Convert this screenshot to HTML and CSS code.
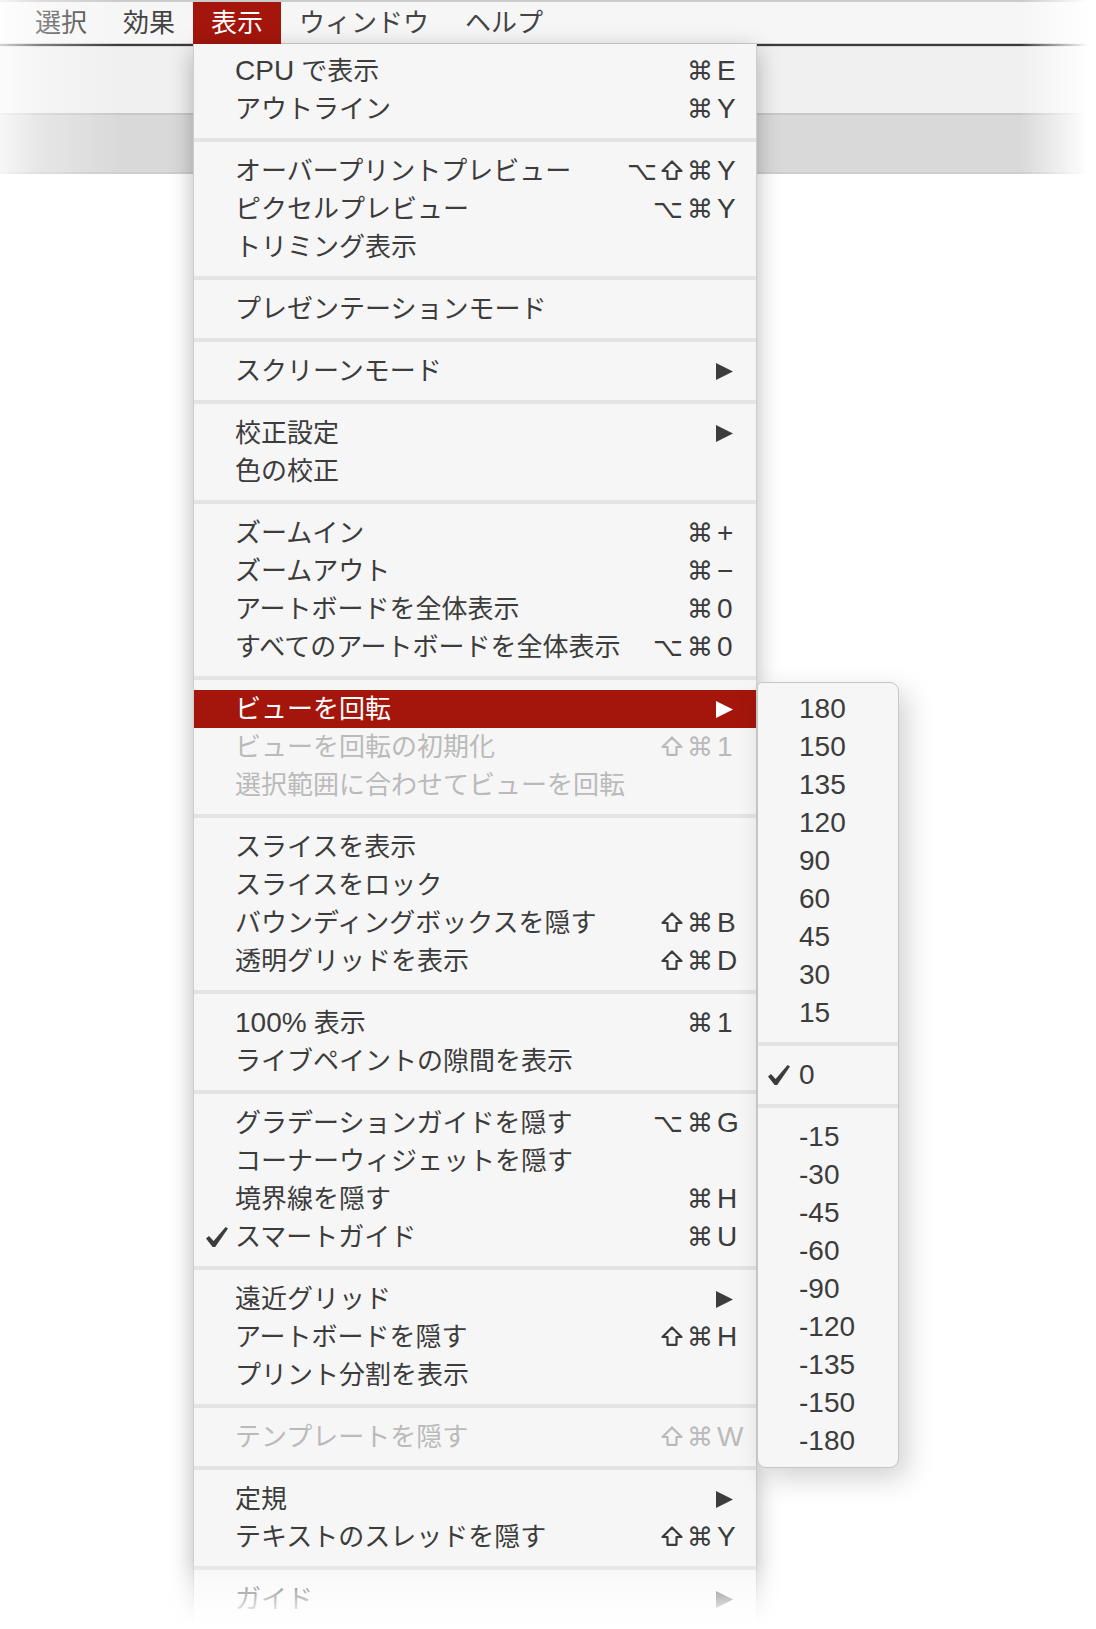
FILE: index.html
```html
<!DOCTYPE html>
<html lang="ja">
<head>
<meta charset="utf-8">
<title>表示メニュー</title>
<link rel="stylesheet" href="styles.css">
</head>
<body>
<div class="screen">
  <div class="menubar">
    <div class="mb-item">選択</div>
    <div class="mb-item">効果</div>
    <div class="mb-item active">表示</div>
    <div class="mb-item">ウィンドウ</div>
    <div class="mb-item">ヘルプ</div>
  </div>
  <div class="window">
    <div class="win-light"></div>
    <div class="win-dark"></div>
  </div>
  <div class="fade-left"></div>
  <div class="fade-right"></div>

  <div class="dropdown">
    <div class="row"><span class="chk"></span><span class="label"><span class="lat">CPU</span> で表示</span><span class="sc"><span class="mods"><span class="m">⌘</span></span><span class="key">E</span></span></div>
    <div class="row"><span class="chk"></span><span class="label">アウトライン</span><span class="sc"><span class="mods"><span class="m">⌘</span></span><span class="key">Y</span></span></div>
    <div class="sep"></div>
    <div class="row"><span class="chk"></span><span class="label">オーバープリントプレビュー</span><span class="sc"><span class="mods"><span class="m">⌥</span><svg class="shift" viewBox="0 0 22 20"><path d="M11 1.5L20.5 11H15.5V18.8H6.5V11H1.5Z"/></svg><span class="m">⌘</span></span><span class="key">Y</span></span></div>
    <div class="row"><span class="chk"></span><span class="label">ピクセルプレビュー</span><span class="sc"><span class="mods"><span class="m">⌥</span><span class="m">⌘</span></span><span class="key">Y</span></span></div>
    <div class="row"><span class="chk"></span><span class="label">トリミング表示</span></div>
    <div class="sep"></div>
    <div class="row"><span class="chk"></span><span class="label">プレゼンテーションモード</span></div>
    <div class="sep"></div>
    <div class="row"><span class="chk"></span><span class="label">スクリーンモード</span><svg class="arrow" viewBox="0 0 17 17"><path d="M0 0L17 8.5L0 17Z"/></svg></div>
    <div class="sep"></div>
    <div class="row"><span class="chk"></span><span class="label">校正設定</span><svg class="arrow" viewBox="0 0 17 17"><path d="M0 0L17 8.5L0 17Z"/></svg></div>
    <div class="row"><span class="chk"></span><span class="label">色の校正</span></div>
    <div class="sep"></div>
    <div class="row"><span class="chk"></span><span class="label">ズームイン</span><span class="sc"><span class="mods"><span class="m">⌘</span></span><span class="key">+</span></span></div>
    <div class="row"><span class="chk"></span><span class="label">ズームアウト</span><span class="sc"><span class="mods"><span class="m">⌘</span></span><span class="key">−</span></span></div>
    <div class="row"><span class="chk"></span><span class="label">アートボードを全体表示</span><span class="sc"><span class="mods"><span class="m">⌘</span></span><span class="key">0</span></span></div>
    <div class="row"><span class="chk"></span><span class="label">すべてのアートボードを全体表示</span><span class="sc"><span class="mods"><span class="m">⌥</span><span class="m">⌘</span></span><span class="key">0</span></span></div>
    <div class="sep"></div>
    <div class="row hl"><span class="chk"></span><span class="label">ビューを回転</span><svg class="arrow" viewBox="0 0 17 17"><path d="M0 0L17 8.5L0 17Z"/></svg></div>
    <div class="row dis"><span class="chk"></span><span class="label">ビューを回転の初期化</span><span class="sc"><span class="mods"><svg class="shift" viewBox="0 0 22 20"><path d="M11 1.5L20.5 11H15.5V18.8H6.5V11H1.5Z"/></svg><span class="m">⌘</span></span><span class="key">1</span></span></div>
    <div class="row dis"><span class="chk"></span><span class="label">選択範囲に合わせてビューを回転</span></div>
    <div class="sep"></div>
    <div class="row"><span class="chk"></span><span class="label">スライスを表示</span></div>
    <div class="row"><span class="chk"></span><span class="label">スライスをロック</span></div>
    <div class="row"><span class="chk"></span><span class="label">バウンディングボックスを隠す</span><span class="sc"><span class="mods"><svg class="shift" viewBox="0 0 22 20"><path d="M11 1.5L20.5 11H15.5V18.8H6.5V11H1.5Z"/></svg><span class="m">⌘</span></span><span class="key">B</span></span></div>
    <div class="row"><span class="chk"></span><span class="label">透明グリッドを表示</span><span class="sc"><span class="mods"><svg class="shift" viewBox="0 0 22 20"><path d="M11 1.5L20.5 11H15.5V18.8H6.5V11H1.5Z"/></svg><span class="m">⌘</span></span><span class="key">D</span></span></div>
    <div class="sep"></div>
    <div class="row"><span class="chk"></span><span class="label"><span class="lat">100%</span> 表示</span><span class="sc"><span class="mods"><span class="m">⌘</span></span><span class="key">1</span></span></div>
    <div class="row"><span class="chk"></span><span class="label">ライブペイントの隙間を表示</span></div>
    <div class="sep"></div>
    <div class="row"><span class="chk"></span><span class="label">グラデーションガイドを隠す</span><span class="sc"><span class="mods"><span class="m">⌥</span><span class="m">⌘</span></span><span class="key">G</span></span></div>
    <div class="row"><span class="chk"></span><span class="label">コーナーウィジェットを隠す</span></div>
    <div class="row"><span class="chk"></span><span class="label">境界線を隠す</span><span class="sc"><span class="mods"><span class="m">⌘</span></span><span class="key">H</span></span></div>
    <div class="row"><span class="chk"><svg class="check" viewBox="0 0 22 20"><path d="M0 11.5L3 9L7.6 14L19.6 0L22 1.6L9.2 20L6.6 20Z"/></svg></span><span class="label">スマートガイド</span><span class="sc"><span class="mods"><span class="m">⌘</span></span><span class="key">U</span></span></div>
    <div class="sep"></div>
    <div class="row"><span class="chk"></span><span class="label">遠近グリッド</span><svg class="arrow" viewBox="0 0 17 17"><path d="M0 0L17 8.5L0 17Z"/></svg></div>
    <div class="row"><span class="chk"></span><span class="label">アートボードを隠す</span><span class="sc"><span class="mods"><svg class="shift" viewBox="0 0 22 20"><path d="M11 1.5L20.5 11H15.5V18.8H6.5V11H1.5Z"/></svg><span class="m">⌘</span></span><span class="key">H</span></span></div>
    <div class="row"><span class="chk"></span><span class="label">プリント分割を表示</span></div>
    <div class="sep"></div>
    <div class="row dis"><span class="chk"></span><span class="label">テンプレートを隠す</span><span class="sc"><span class="mods"><svg class="shift" viewBox="0 0 22 20"><path d="M11 1.5L20.5 11H15.5V18.8H6.5V11H1.5Z"/></svg><span class="m">⌘</span></span><span class="key">W</span></span></div>
    <div class="sep"></div>
    <div class="row"><span class="chk"></span><span class="label">定規</span><svg class="arrow" viewBox="0 0 17 17"><path d="M0 0L17 8.5L0 17Z"/></svg></div>
    <div class="row"><span class="chk"></span><span class="label">テキストのスレッドを隠す</span><span class="sc"><span class="mods"><svg class="shift" viewBox="0 0 22 20"><path d="M11 1.5L20.5 11H15.5V18.8H6.5V11H1.5Z"/></svg><span class="m">⌘</span></span><span class="key">Y</span></span></div>
    <div class="sep"></div>
    <div class="row"><span class="chk"></span><span class="label">ガイド</span><svg class="arrow" viewBox="0 0 17 17"><path d="M0 0L17 8.5L0 17Z"/></svg></div>
  </div>

  <div class="submenu">
    <div class="srow"><span class="schk"></span><span>180</span></div>
    <div class="srow"><span class="schk"></span><span>150</span></div>
    <div class="srow"><span class="schk"></span><span>135</span></div>
    <div class="srow"><span class="schk"></span><span>120</span></div>
    <div class="srow"><span class="schk"></span><span>90</span></div>
    <div class="srow"><span class="schk"></span><span>60</span></div>
    <div class="srow"><span class="schk"></span><span>45</span></div>
    <div class="srow"><span class="schk"></span><span>30</span></div>
    <div class="srow"><span class="schk"></span><span>15</span></div>
    <div class="sep"></div>
    <div class="srow"><span class="schk"><svg class="check" viewBox="0 0 22 20"><path d="M0 11.5L3 9L7.6 14L19.6 0L22 1.6L9.2 20L6.6 20Z"/></svg></span><span>0</span></div>
    <div class="sep"></div>
    <div class="srow"><span class="schk"></span><span>-15</span></div>
    <div class="srow"><span class="schk"></span><span>-30</span></div>
    <div class="srow"><span class="schk"></span><span>-45</span></div>
    <div class="srow"><span class="schk"></span><span>-60</span></div>
    <div class="srow"><span class="schk"></span><span>-90</span></div>
    <div class="srow"><span class="schk"></span><span>-120</span></div>
    <div class="srow"><span class="schk"></span><span>-135</span></div>
    <div class="srow"><span class="schk"></span><span>-150</span></div>
    <div class="srow"><span class="schk"></span><span>-180</span></div>
  </div>

  <div class="fade-bottom"></div>
</div>
</body>
</html>
```

FILE: styles.css
```css
* { box-sizing: border-box; }
html, body { margin: 0; padding: 0; background: #fff; }
body {
  width: 1096px;
  height: 1629px;
  overflow: hidden;
  font-family: "Liberation Sans", "Noto Sans CJK JP", sans-serif;
  color: #3c3c3c;
}
.screen {
  position: relative;
  width: 1096px;
  height: 1629px;
  overflow: hidden;
  background: #fff;
}

/* menu bar */
.menubar {
  display: flex;
  height: 44px;
  padding-left: 17px;
  background: #f6f6f6;
  border-top: 2px solid #cbcbcb;
  border-bottom: 1px solid #d0d0d0;
}
.mb-item {
  padding: 0 18px;
  font-size: 26px;
  line-height: 42px;
  height: 41px;
  color: #444;
  white-space: nowrap;
}
.mb-item.active {
  background: #a4160c;
  color: #fff;
  height: 42px;
  margin-bottom: -1px;
}

/* window behind */
.window { border-top: 2px solid #3a3a3a; }
.win-light {
  height: 69px;
  background: #f0f0f0;
  border-top: 1px solid #d8d8d8;
  border-bottom: 2px solid #c9c9c9;
}
.win-dark {
  height: 59px;
  background: #d9d9d9;
  border-bottom: 2px solid #cdcdcd;
}
.fade-left {
  position: absolute;
  left: 0; top: 0;
  width: 120px; height: 180px;
  background: linear-gradient(to right, rgba(255,255,255,0.78), rgba(255,255,255,0.35) 40px, rgba(255,255,255,0));
}
.fade-right {
  position: absolute;
  left: 1020px; top: 0;
  width: 76px; height: 180px;
  background: linear-gradient(to right, rgba(255,255,255,0), #fff 68px);
}

/* dropdown */
.dropdown {
  position: absolute;
  left: 193px;
  top: 44px;
  width: 564px;
  height: 1640px;
  padding-top: 8px;
  background: #f6f6f6;
  border-left: 1px solid #cdcdcd;
  border-right: 1px solid #cdcdcd;
  box-shadow: 0 6px 22px rgba(0,0,0,0.28);
  font-size: 26px;
}
.row {
  display: flex;
  align-items: center;
  height: 38px;
  padding: 0 10px 0 12px;
  line-height: 38px;
  white-space: nowrap;
}
.chk {
  flex: none;
  width: 29px;
  display: flex;
  align-items: center;
}
.label { flex: 1; }
.lat { font-size: 28px; line-height: 30px; }
.sc { display: flex; align-items: center; }
.mods {
  display: flex;
  align-items: center;
  gap: 4px;
  margin-right: 4px;
  font-family: "DejaVu Sans", sans-serif;
  font-size: 26px;
  line-height: 30px;
}
.m { display: block; }
.shift {
  width: 22px;
  height: 20px;
  fill: none;
  stroke: currentColor;
  stroke-width: 2.2;
  stroke-linejoin: round;
  margin-top: -2px;
}
.key {
  width: 29px;
  font-size: 28px;
  line-height: 30px;
}
.arrow {
  width: 17px;
  height: 17px;
  margin-right: 13px;
  fill: #3c3c3c;
}
.check { width: 22px; height: 20px; fill: #3c3c3c; }
.row.hl { background: #a4160c; color: #fff; }
.row.hl .arrow { fill: #fff; }
.row.dis { color: #bababa; }
.sep {
  height: 4px;
  background: #e4e4e4;
  margin: 10px 0;
}

/* submenu */
.submenu {
  position: absolute;
  left: 757px;
  top: 682px;
  width: 142px;
  padding: 7px 0;
  background: #f6f6f6;
  border: 1px solid #c6c6c6;
  border-radius: 5px 9px 9px 9px;
  box-shadow: 8px 10px 28px rgba(0,0,0,0.18);
  font-size: 28px;
}
.srow {
  display: flex;
  align-items: center;
  height: 38px;
  line-height: 38px;
  padding-left: 10px;
}
.schk {
  flex: none;
  width: 31px;
  display: flex;
  align-items: center;
}

.fade-bottom {
  position: absolute;
  left: 0;
  top: 1560px;
  width: 1096px;
  height: 69px;
  background: linear-gradient(to bottom, rgba(255,255,255,0), rgba(255,255,255,0.5) 25px, rgba(255,255,255,0.85) 50px, #fff 66px);
}
```
